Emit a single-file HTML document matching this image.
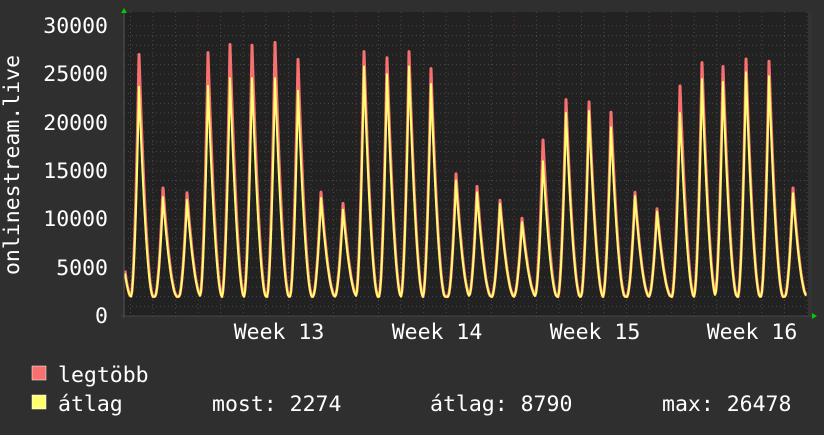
<!DOCTYPE html>
<html><head><meta charset="utf-8"><style>
body{margin:0;background:#2f2f2f;width:824px;height:430px;overflow:hidden}
svg text{font-family:"DejaVu Sans Mono","Liberation Mono",monospace;fill:#fff;font-size:21.5px}
</style></head><body>
<svg id="s" width="824" height="430" xmlns="http://www.w3.org/2000/svg">
<rect x="0" y="0" width="824" height="430" fill="#2f2f2f"/>
<rect x="124" y="12" width="686" height="304" fill="#222"/>
<rect x="808" y="12" width="4" height="304" fill="#333"/>
<g id="grid"></g>
<path id="rp" fill="none" stroke="#f87070" stroke-width="3" stroke-linejoin="round"/>
<path id="yp" fill="none" stroke="#ffff70" stroke-width="2" stroke-linejoin="round"/>
<line x1="124" y1="12" x2="124" y2="318" stroke="#555"/>
<line x1="121" y1="316" x2="812" y2="316" stroke="#444"/>
<polygon points="121,13 124,8 127,13" fill="#0c0"/>
<polygon points="812,313 817,316 812,319" fill="#0c0"/>
<g text-anchor="end">
<text x="108" y="33">30000</text><text x="108" y="81">25000</text><text x="108" y="130">20000</text>
<text x="108" y="178">15000</text><text x="108" y="226">10000</text><text x="108" y="275">5000</text>
<text x="108" y="323">0</text></g>
<text transform="translate(19,165) rotate(-90)" text-anchor="middle">onlinestream.live</text>
<g text-anchor="middle"><text x="279" y="339">Week 13</text><text x="437" y="339">Week 14</text>
<text x="595" y="339">Week 15</text><text x="752" y="339">Week 16</text></g>
<rect x="32" y="366" width="14" height="14" fill="#f87070" stroke="#fff" stroke-width="0.5"/>
<rect x="32" y="395" width="14" height="14" fill="#ffff70" stroke="#fff" stroke-width="0.5"/>
<text x="58" y="382">legtöbb</text><text x="58" y="411">átlag</text>
<text x="212" y="411">most: 2274</text><text x="430" y="411">átlag: 8790</text><text x="662" y="411">max: 26478</text>
</svg>
<script>
var g=document.getElementById("grid"),h="";
function Y(v){return 316-v*0.00967;}
for(var v=1000;v<30500;v+=1000){var y=Y(v);h+='<line x1="124" x2="808" y1="'+y+'" y2="'+y+'" stroke="'+(v%5000?"#4a4a4a":"#6a3434")+'" stroke-dasharray="1,3"/>';}
for(var x=130.5;x<808;x+=22.55){var maj=Math.abs(((x-198)/157.85)-Math.round((x-198)/157.85))<0.02;
h+='<line y1="12" y2="318" x1="'+x+'" x2="'+x+'" stroke="'+(maj?"#6a3434":"#4a4a4a")+'" stroke-dasharray="1,3"/>';}
g.innerHTML=h;
var P=[[139,27000,23700],[163,13200,12300],[187,12700,12000],[208,27200,23800],[230,28000,24600],[252,28000,24600],[275,28200,24600],[298,26500,23300],[321,12800,12200],[343,11600,11000],[364,27300,25800],[387,26700,25000],[409,27300,25800],[431,25500,24000],[456,14700,14000],[477,13400,12800],[500,11900,11600],[522,10100,9700],[543,18200,16000],[566,22300,21000],[589,22100,21200],[611,21000,19500],[635,12700,12400],[657,11100,10800],[680,23700,21000],[702,26200,24500],[723,25800,24200],[746,26500,25200],[769,26300,24800],[793,13200,12700],[117,14000,13000]];
function f(x,k){var s=0;for(var i=0;i<P.length;i++){var d=x-P[i][0],W=d<0?8:14,t=1-Math.abs(d)/W;if(t>0)s+=(P[i][k]-2000)*Math.pow(t,1.8);}return 2000+s;}
var r="",yy="";
for(var x=125;x<=806;x+=1){r+=(x==125?"M":"L")+x+","+Y(f(x,1)+(x%3)*40).toFixed(1);yy+=(x==125?"M":"L")+x+","+Y(f(x,2)).toFixed(1);}
document.getElementById("rp").setAttribute("d",r);document.getElementById("yp").setAttribute("d",yy);
</script>
</body></html>
